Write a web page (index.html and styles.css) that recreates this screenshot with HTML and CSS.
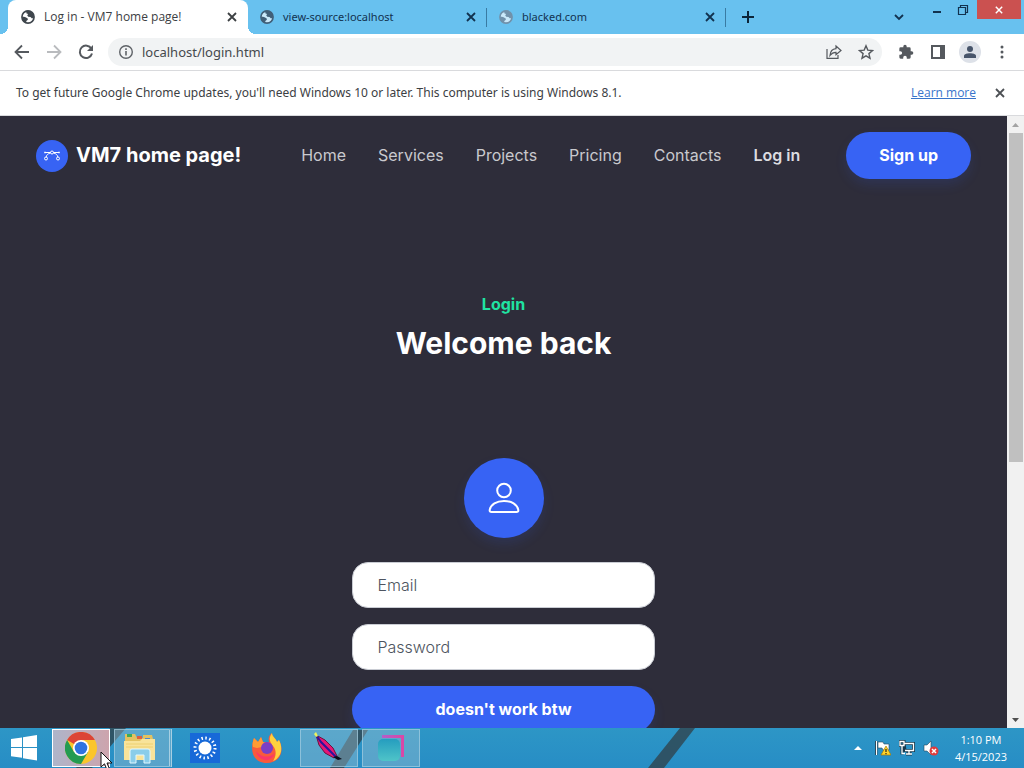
FILE: index.html
```html
<!DOCTYPE html>
<html lang="en">
<head>
<meta charset="utf-8">
<title>Log in - VM7 home page!</title>
<link rel="stylesheet" href="styles.css">
</head>
<body>
<svg class="defs" width="0" height="0" aria-hidden="true">
  <symbol id="globe" viewBox="0 0 16 16"><circle cx="8" cy="8" r="6.1" fill="#fff" fill-opacity=".65" stroke="currentColor" stroke-width="1.6"/><path d="M2 7.5 5 8l2.5 1.2.4 1.6-1.6 1.2v2.2C3.500 13.500 2 11 2 7.500zM6 1.800l4-.1L13.700 5 14 8.800l-2 .8-1.500-1.500-2.300-.3-1-1.500 1-1.300L6.500 4.500z" fill="currentColor"/></symbol>
  <symbol id="cross" viewBox="0 0 10 10"><path d="M1 1l8 8M9 1L1 9" fill="none" stroke="currentColor" stroke-width="1.8"/></symbol>
</svg>

<header class="tabstrip">
  <div class="tab tab-active"><svg class="icon"><use href="#globe"/></svg><span class="tab-title">Log in - VM7 home page!</span><button class="plain" aria-label="Close tab"><svg class="icon-x"><use href="#cross"/></svg></button></div>
  <div class="tab"><svg class="icon"><use href="#globe"/></svg><span class="tab-title">view-source:localhost</span><button class="plain" aria-label="Close tab"><svg class="icon-x"><use href="#cross"/></svg></button></div>
  <div class="tab"><svg class="icon icon-faded"><use href="#globe"/></svg><span class="tab-title">blacked.com</span><button class="plain" aria-label="Close tab"><svg class="icon-x"><use href="#cross"/></svg></button></div>
  <button class="plain new-tab" aria-label="New tab"><svg width="12" height="12" viewBox="0 0 12 12"><path d="M6 0v12M0 6h12" stroke="currentColor" stroke-width="2"/></svg></button>
  <div class="window-controls">
    <button class="plain chevron" aria-label="Search tabs"><svg width="10" height="7" viewBox="0 0 10 7"><path d="M1 1l4 4 4-4" fill="none" stroke="currentColor" stroke-width="1.8"/></svg></button>
    <button class="plain win-button" aria-label="Minimize"><svg width="12" height="12" viewBox="0 0 12 12"><path d="M2 8h8" stroke="currentColor" stroke-width="2"/></svg></button>
    <button class="plain win-button" aria-label="Restore"><svg width="12" height="12" viewBox="0 0 12 12"><path d="M1.500 3.500h7v7h-7zM3.500 3V1.500h7v7H9" fill="none" stroke="currentColor" stroke-width="1.200"/></svg></button>
    <button class="plain win-close" aria-label="Close"><svg width="8" height="8" viewBox="0 0 10 10"><use href="#cross"/></svg></button>
  </div>
</header>

<div class="toolbar">
  <button class="plain" aria-label="Back"><svg width="16" height="16" viewBox="0 0 16 16"><path d="M15 8H2M8 1.500L1.500 8 8 14.500" fill="none" stroke="currentColor" stroke-width="1.800"/></svg></button>
  <button class="plain disabled" aria-label="Forward"><svg width="16" height="16" viewBox="0 0 16 16"><path d="M1 8h13M8 1.500L14.500 8 8 14.500" fill="none" stroke="currentColor" stroke-width="1.800"/></svg></button>
  <button class="plain" aria-label="Reload"><svg width="16" height="16" viewBox="0 0 16 16"><path d="M13.400 4.700A6.200 6.200 0 1 0 14 9.500" fill="none" stroke="currentColor" stroke-width="2"/><path d="M15 1v6H9z" fill="currentColor"/></svg></button>
  <div class="address">
    <svg width="16" height="16" viewBox="0 0 16 16"><circle cx="8" cy="8" r="6.300" fill="none" stroke="#5f6368" stroke-width="1.400"/><path d="M8 7v4.500M8 4.300v1.700" stroke="#5f6368" stroke-width="1.600"/></svg>
    <input class="address-input" type="text" value="localhost/login.html" aria-label="Address">
    <button class="plain" aria-label="Share"><svg width="16" height="16" viewBox="0 0 16 16"><path d="M1 5v9.300h11V11" fill="none" stroke="currentColor" stroke-width="1.200"/><path d="M10 2l5 4.500-5 4.300V8.300C7 8.200 5.500 9.500 4 11.500 4.300 7.500 6.500 4.900 10 4.600z" fill="none" stroke="currentColor" stroke-width="1.200"/></svg></button>
    <button class="plain" aria-label="Bookmark"><svg width="16" height="16" viewBox="0 0 16 16"><path d="M8 1.800l1.800 4.300 4.700.4-3.600 3.100 1.100 4.600L8 11.800l-4 2.400 1.100-4.600L1.500 6.500l4.700-.4z" fill="none" stroke="currentColor" stroke-width="1.400"/></svg></button>
  </div>
  <div class="toolbar-actions">
    <button class="plain" aria-label="Extensions"><svg width="16" height="16" viewBox="0 0 24 24"><path d="M20.500 11H19V7a2 2 0 0 0-2-2h-4V3.500a2.500 2.500 0 0 0-5 0V5H4a2 2 0 0 0-2 2v3.800h1.500a2.700 2.700 0 0 1 0 5.400H2V20a2 2 0 0 0 2 2h3.800v-1.500a2.700 2.700 0 0 1 5.400 0V22H17a2 2 0 0 0 2-2v-4h1.500a2.500 2.500 0 0 0 0-5z" fill="currentColor"/></svg></button>
    <button class="plain" aria-label="Side panel"><svg width="16" height="16" viewBox="0 0 16 16"><path d="M1 1h14v14H1zM3 3v10h7V3z" fill="currentColor" fill-rule="evenodd"/></svg></button>
    <button class="plain profile" aria-label="Profile"><svg width="12" height="12" viewBox="0 0 12 12"><circle cx="6" cy="3" r="3" fill="currentColor"/><path d="M0 12V10C0 8 3 7.200 6 7.200S12 8 12 10v2z" fill="currentColor"/></svg></button>
    <button class="plain" aria-label="Menu"><svg width="16" height="16" viewBox="0 0 16 16"><g fill="currentColor"><circle cx="8" cy="3" r="1.500"/><circle cx="8" cy="8" r="1.500"/><circle cx="8" cy="13" r="1.500"/></g></svg></button>
  </div>
</div>

<div class="infobar">
  <span class="info-text">To get future Google Chrome updates, you'll need Windows 10 or later. This computer is using Windows 8.1.</span>
  <a class="learn" href="#">Learn more</a>
  <button class="plain" aria-label="Dismiss"><svg class="icon-x dismiss"><use href="#cross"/></svg></button>
</div>

<div class="viewport">
  <div class="site">
    <nav class="nav">
      <a class="brand" href="#"><span class="brand-icon"><svg width="16" height="16" viewBox="0 0 16 16" fill="none" stroke="#fff"><circle cx="8" cy="4.500" r="1.500"/><circle cx="2" cy="10.500" r="1.500"/><circle cx="14" cy="10.500" r="1.500"/><path d="M1 4.500h5.500M9.500 4.500H15M6.500 5C4 5.500 2.500 7 2.200 9M9.500 5c2.500.5 4 2 4.300 4"/><circle cx="1" cy="4.500" r=".6"/><circle cx="15" cy="4.500" r=".6"/></svg></span><span>VM7 home page!</span></a>
      <div class="links">
        <a href="#">Home</a><a href="#">Services</a><a href="#">Projects</a><a href="#">Pricing</a><a href="#">Contacts</a><a class="current" href="#">Log in</a>
      </div>
      <a class="pill signup" href="#">Sign up</a>
    </nav>
    <main class="login">
      <p class="eyebrow">Login</p>
      <h1>Welcome back</h1>
      <div class="avatar"><svg width="32" height="32" viewBox="0 0 32 32" fill="none" stroke="#fff" stroke-width="2"><circle cx="16" cy="8.500" r="6.800"/><path d="M3.500 30h25c1.200 0 2-.7 1.800-2C29.300 22.500 23.500 19 16 19S2.700 22.500 1.700 28C1.500 29.300 2.300 30 3.500 30z"/></svg></div>
      <form class="form">
        <input class="field" type="email" placeholder="Email" aria-label="Email">
        <input class="field" type="password" placeholder="Password" aria-label="Password">
        <button class="pill" type="button">doesn't work btw</button>
      </form>
    </main>
  </div>
  <div class="scrollbar" aria-hidden="true">
    <svg width="17" height="17" viewBox="0 0 17 17"><path d="M5 11l3.500-4 3.500 4z" fill="#a3a3a3"/></svg>
    <div class="track"><div class="thumb"></div></div>
    <svg width="17" height="17" viewBox="0 0 17 17"><path d="M5 7l3.500 4L12 7z" fill="#505050"/></svg>
  </div>
</div>

<footer class="taskbar">
  <svg class="stripes" width="1024" height="40" viewBox="0 0 1024 40" aria-hidden="true"><g fill="#303f46" fill-opacity=".75"><path d="M110 0h16L92 40H76zM353 2h15L344 40H330zM680 0h15L664 40H648z"/></g></svg>
  <button class="task" aria-label="Start"><svg width="28" height="26" viewBox="0 0 28 26"><path d="M1 4l11-1.600V12H1zM13 2.200L27 0v12H13zM1 13h11v9.800L1 21.200zM13 13h14v12.500l-14-2.200z" fill="#fff"/></svg></button>
  <button class="task task-focused" aria-label="Google Chrome"><svg width="32" height="32" viewBox="0 0 32 32"><circle cx="16" cy="16" r="16" fill="#fbc52c"/><path d="M16 16L2.100 8A16 16 0 0 1 29.900 8H16z" fill="#dc4436"/><path d="M2.100 8A16 16 0 0 0 16 32l7-12-7-4-7 4z" fill="#239b51"/><circle cx="16" cy="16" r="8" fill="#fff"/><circle cx="16" cy="16" r="6.300" fill="#2f73df"/></svg></button>
  <button class="task task-open task-stack" aria-label="File Explorer"><svg width="34" height="32" viewBox="0 0 34 32"><path d="M2 2h10l2 4h6V3h9l1 4v21H2z" fill="#e2c261"/><path d="M4 2h5v3H4z" fill="#3eaa57"/><path d="M14 4h5v3h-5z" fill="#dc6040"/><path d="M22 6h5v3h-5z" fill="#4d87cf"/><path d="M1 9h16l2-2h13v21H1z" fill="#f8e39a"/><path d="M3 12h27M3 15h27" stroke="#edd071"/><path d="M7 31V19q0-2 2-2h16q2 0 2 2v12h-6v-8h-8v8z" fill="#8acdea" stroke="#e0f7ff"/></svg></button>
  <button class="task" aria-label="Brightness"><svg width="30" height="30" viewBox="0 0 30 30"><path d="M0 0h30v30H0z" fill="#1769d8"/><circle cx="15" cy="15" r="6.500" fill="#fff"/><circle cx="15" cy="15" r="10" fill="none" stroke="#fff" stroke-width="3" stroke-dasharray="1.500 2.427"/></svg></button>
  <button class="task" aria-label="Firefox"><svg width="32" height="32" viewBox="0 0 32 32"><path d="M3 6l4 4 3-5 2 5h6c-1-4 0-7 3-9 0 4 4 5 5 9l2-2c6 11 1 23-12 23S-2 20 3 6z" fill="#f95a3c"/><path d="M21 1c0 4 4 5 5 9l2-2c5 10 1 18-6 21 3-4 4-11 0-15-3-4-5-7-1-13z" fill="#ffd13e"/><path d="M3 6l4 4 3-5 2 5 5 2-6 3-5 1-4-1c-1-3 0-6 1-9z" fill="#ff9b34"/><circle cx="16" cy="16" r="6" fill="#7b3fc4"/><path d="M5 19c4 6 13 8 19 2-2 5-6 8-10 7-5-1-8-4-9-9z" fill="#fc3768"/></svg></button>
  <button class="task task-open" aria-label="Feather app"><svg width="32" height="32" viewBox="0 0 32 32"><path d="M3 3l9 5 8 8 4 8-3 2-9-5-6-8z" fill="#e51776" stroke="#6b123d"/><path d="M3 3l5 7 6 6 9 9" fill="none" stroke="#2b149b" stroke-width="2"/><path d="M20 25l4-1 5 3-4 1z" fill="#090c1b"/><path d="M1 2l2-2 2 4-2 1z" fill="#edf35f"/></svg></button>
  <button class="task task-open" aria-label="Capture app"><svg width="32" height="32" viewBox="0 0 32 32"><defs><linearGradient id="aqua" x2="0" y2="1"><stop stop-color="#259dbf"/><stop offset="1" stop-color="#4fc4c8"/></linearGradient><linearGradient id="frame" x2="1"><stop stop-color="#b25fc9"/><stop offset="1" stop-color="#dc45a4"/></linearGradient></defs><rect x="3" y="7" width="22" height="22" rx="5" fill="url(#aqua)"/><path d="M7 3h22v22h-3V6H7z" fill="url(#frame)"/></svg></button>
  <div class="tray">
    <svg width="8" height="6" viewBox="0 0 8 6"><path d="M0 5l4-4 4 4z" fill="#fff"/></svg>
    <svg width="16" height="16" viewBox="0 0 16 16"><path d="M1 1v14" stroke="#17384b" stroke-width="3"/><path d="M1.500 1v14" stroke="#fff" stroke-width="1.200"/><path d="M3 2h5l1 2h5v6H8L7 8H3z" fill="#fff" stroke="#27475b" stroke-width=".6"/><path d="M11 6l5 9H6z" fill="#ffd329" stroke="#a87d00" stroke-width=".7"/><path d="M11 9v3m0 1v1.200" stroke="#222" stroke-width="1.200"/></svg>
    <svg width="16" height="16" viewBox="0 0 16 16" fill="none"><path d="M5 3.500h9.500v7H6zM7 14h6M10 11v3M3 6v8.500M1 1.500h4v4H1z" stroke="#17384b" stroke-width="3"/><path d="M5 3.500h9.500v7H6M7 14h6M10 11v3M3 6v7.500h3M1 1.500h4v4H1z" stroke="#fff" stroke-width="1.300"/></svg>
    <svg width="16" height="16" viewBox="0 0 16 16"><path d="M1 5h3l4-4v14l-4-4H1z" fill="#fff" stroke="#27475b" stroke-width=".6"/><circle cx="11" cy="11" r="4.500" fill="#e13b3b"/><path d="M9 9l4 4M13 9l-4 4" stroke="#fff" stroke-width="1.500"/></svg>
    <div class="clock"><span>1:10 PM</span><span>4/15/2023</span></div>
  </div>
  <svg class="cursor" width="13" height="20" viewBox="0 0 13 20" aria-hidden="true"><path d="M1 1v15l3.500-3.200L7 19l2.500-1-2.500-6h5z" fill="#fff" stroke="#111"/></svg>
</footer>
</body>
</html>
```
FILE: styles.css
```css
* { box-sizing: border-box; }
body { margin: 0; height: 100vh; display: flex; flex-direction: column; overflow: hidden; font: 12px/16px "Open Sans", "Noto Sans", sans-serif; color: #3c4043; background: #fff; }
svg { display: block; flex: none; }
a { color: inherit; text-decoration: none; }
.defs { position: absolute; }
.plain { display: flex; align-items: center; justify-content: center; padding: 0; border: 0; background: none; color: inherit; }
.icon { width: 16px; height: 16px; color: #3f464d; }
.icon-x { width: 10px; height: 10px; }

.tabstrip { flex: none; display: flex; height: 34px; padding-left: 8px; background: #68c1ef; color: #12324f; }
.tab { flex: 0 1 239px; display: flex; align-items: center; gap: 8px; padding: 0 11px 0 11px; position: relative; }
.tab:not(.tab-active)::after { content: ""; position: absolute; right: 0; top: 8px; height: 19px; width: 1px; background: #397ba3; }
.tab-active { flex-basis: 240px; padding-left: 12px; background: #fff; border-radius: 8px 8px 0 0; color: #3c4043; }
.tab-active::before, .tab-active::after { content: ""; position: absolute; bottom: 0; width: 8px; height: 8px; }
.tab-active::before { right: 100%; background: radial-gradient(circle at 0 0, #68c1ef 8px, #fff 8px); }
.tab-active::after { left: 100%; background: radial-gradient(circle at 100% 0, #68c1ef 8px, #fff 8px); }
.tab .icon { color: #415f78; }
.tab-active .icon { color: #3f464d; }
.tab .icon-faded { color: #7191aa; }
.tab-title { flex: 1; font: 11px/16px "Noto Sans", sans-serif; white-space: nowrap; }
.tab-active .tab-title { font: 12px/16px "Open Sans", sans-serif; }
.new-tab { width: 44px; color: #0c2539; }
.window-controls { display: flex; align-items: flex-start; margin-left: auto; }
.chevron { width: 26px; height: 34px; margin-right: 12px; }
.win-button { width: 26px; height: 19px; }
.win-close { width: 44px; height: 19px; margin: 0 3px 0 1px; background: #cb5150; color: #fff; }

.toolbar { flex: none; display: flex; align-items: center; gap: 16px; height: 37px; padding: 0 14px; border-bottom: 1px solid #d9dadd; color: #55595e; }
.disabled { color: #b9bbbe; }
.address { flex: 1; display: flex; align-items: center; gap: 16px; height: 28px; margin-left: -2px; padding: 0 8px 0 10px; border-radius: 14px; background: #f1f3f4; }
.address-input { flex: 1; min-width: 0; margin-left: -8px; padding: 0; border: 0; background: none; font: 13px/20px "Noto Sans", sans-serif; color: #45494d; outline: 0; }
.toolbar-actions { display: flex; align-items: center; gap: 16px; height: 28px; }
.profile { width: 22px; height: 22px; margin: 0 -3px; border-radius: 50%; background: #dde1e8; color: #47546a; }

.infobar { flex: none; display: flex; align-items: center; gap: 19px; height: 45px; padding: 0 19px 0 16px; border-bottom: 1px solid #d9dadd; }
.info-text { flex: 1; font-family: "Noto Sans", sans-serif; }
.learn { color: #3874cb; text-decoration: underline; }
.dismiss { color: #4c5054; }

.viewport { flex: 1; min-height: 0; display: flex; overflow: hidden; background: #2e2d3a; font: 16px/24px Inter, sans-serif; color: #fff; }
.site { flex: 1; min-width: 0; }
.nav { display: flex; align-items: center; padding: 16px 36px; }
.brand { display: flex; align-items: center; gap: 8px; font-size: 20px; line-height: 23px; font-weight: 700; }
.brand-icon { display: grid; place-items: center; width: 32px; height: 32px; border-radius: 50%; background: #3763f4; }
.links { display: flex; gap: 32px; margin: 0 46px 0 auto; color: #c9c9ce; font-weight: 400; line-height: 23px; }
.current { color: #dcdce0; font-weight: 600; }
.pill { padding: 12px 33px; border: 0; border-radius: 24px; background: #3763f4; color: #fff; font: 700 16px/23px Inter, sans-serif; text-align: center; box-shadow: 0 6px 12px #3763f422; }
.login { display: flex; flex-direction: column; align-items: center; padding-top: 97px; }
.eyebrow { margin: 0 0 8px; color: #20e3a2; font-weight: 700; }
h1 { margin: 0 0 96px; font-size: 30px; line-height: 38px; font-weight: 700; }
.avatar { display: grid; place-items: center; width: 80px; height: 80px; margin-bottom: 24px; border-radius: 50%; background: #3763f4; box-shadow: 0 6px 12px #3763f422; }
.form { display: flex; flex-direction: column; gap: 16px; width: 30%; }
.field { width: 100%; height: 46px; padding: 0 24px; border: 1px solid #c9ccd3; border-radius: 16px; background: #fff; font: 300 16px/24px Inter, sans-serif; }
.field::placeholder { color: #4d5460; opacity: 1; }
.scrollbar { flex: none; display: flex; flex-direction: column; width: 17px; background: #f1f1f1; }
.track { flex: 1; padding: 0 1px 0 2px; }
.thumb { height: 57%; background: #c0c0c0; }

.taskbar { flex: none; position: relative; display: flex; gap: 4px; height: 40px; overflow: hidden; background: linear-gradient(#2d96c6, #278dc5); color: #fff; }
.stripes { position: absolute; left: 0; top: 0; }
.task { position: relative; display: grid; place-items: center; flex: none; width: 58px; height: 38px; margin-top: 1px; padding: 0; border: 1px solid transparent; background: none; }
.task:first-of-type { width: 48px; }
.task-open { border-color: #a7cfe2aa; background: #a3c4d266; }
.task-focused { border-color: #fff; background: linear-gradient(90deg, #aeb5ca, #cda4ad); }
.task-stack { padding-right: 4px; border-right: 3px double #a7cfe2; }
.tray { display: flex; align-items: center; gap: 8px; margin-left: auto; padding-right: 17px; position: relative; }
.tray > svg:first-child { margin-right: 5px; }
.clock { display: flex; flex-direction: column; align-items: center; margin-left: 8px; font-size: 11px; line-height: 17px; }
.cursor { position: absolute; left: 100px; top: 23px; }
```
